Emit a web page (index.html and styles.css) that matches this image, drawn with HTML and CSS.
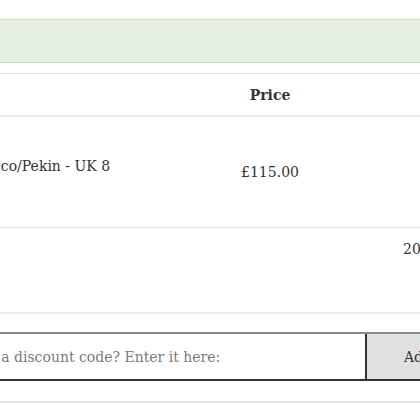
FILE: index.html
```html
<!DOCTYPE html>
<html lang="en">
<head>
<meta charset="utf-8">
<title>Basket</title>
<link rel="stylesheet" href="styles.css">
</head>
<body>
<div class="viewport">
  <div class="page">
    <div class="notice"></div>

    <div class="cart">
      <div class="row head">
        <div class="cell product"></div>
        <div class="cell price">Price</div>
        <div class="cell total"></div>
      </div>
      <div class="row item">
        <div class="cell product"><span class="name">Tobacco/Pekin - UK 8</span></div>
        <div class="cell price">£115.00</div>
        <div class="cell total"></div>
      </div>
      <div class="row extra">
        <div class="cell product"></div>
        <div class="cell price"></div>
        <div class="cell total">20</div>
      </div>
    </div>

    <form class="discount">
      <input class="code" type="text" placeholder="Have a discount code? Enter it here:">
      <button class="apply" type="button">Add</button>
    </form>

    <div class="rule"></div>
  </div>
</div>
</body>
</html>
```

FILE: styles.css
```css
html, body {
  margin: 0;
  padding: 0;
  background: #fff;
}

body {
  font-family: "DejaVu Serif", "Liberation Serif", serif;
  font-size: 14px;
  line-height: 20px;
  color: #333;
}

.viewport {
  width: 420px;
  height: 420px;
  overflow: hidden;
}

.page {
  width: 1000px;
  margin-left: -300px;
  padding-top: 19px;
}

.notice {
  height: 42px;
  background: #e4efe2;
  border-top: 1px solid #cfdccb;
  border-bottom: 1px solid #cfdccb;
  margin-bottom: 10px;
}

.cart {
  border-top: 1px solid #e2e2e2;
}

.row {
  display: grid;
  grid-template-columns: 480px 180px 340px;
}

.head {
  height: 41px;
  border-bottom: 2px solid #ececec;
  align-items: center;
}

.head .price {
  font-weight: bold;
  text-align: center;
}

.item {
  height: 110px;
  border-bottom: 1px solid #dedede;
}

.item .product {
  padding-top: 39px;
  padding-left: 259px;
}

.item .price {
  align-self: center;
  text-align: center;
}

.extra {
  height: 84px;
  border-bottom: 2px solid #ececec;
}

.extra .total {
  padding-top: 11px;
  padding-left: 43px;
}

.discount {
  display: flex;
  margin: 18px 0 20px 200px;
  height: 49px;
  box-sizing: border-box;
  border-top: 2px solid #8a8a8a;
  border-bottom: 2px solid #333;
}

.code {
  flex: 0 0 465px;
  box-sizing: border-box;
  width: 465px;
  border: 0;
  margin: 0;
  padding: 0 0 0 60px;
  font: inherit;
  color: #333;
  background: #fff;
  outline: none;
}

.code::placeholder {
  color: #7a7a7a;
  opacity: 1;
}

.apply {
  flex: 1;
  border: 0;
  border-left: 2px solid #333;
  margin: 0;
  padding: 0 0 0 37px;
  text-align: left;
  background: #e0e0e0;
  font: inherit;
  color: #333;
}

.rule {
  height: 2px;
  background: #e4e4e4;
}
```
